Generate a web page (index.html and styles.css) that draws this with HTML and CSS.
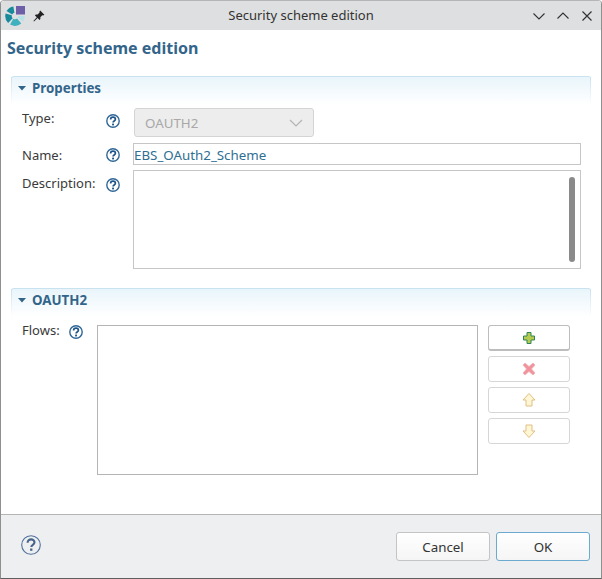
FILE: index.html
```html
<!DOCTYPE html>
<html lang="en">
<head>
  <meta charset="UTF-8">
  <title>Security scheme edition</title>
  <link rel="stylesheet" href="styles.css">
</head>
<body>
  <svg class="defs" width="0" height="0">
    <symbol id="help" viewBox="0 0 14 14">
      <circle cx="7" cy="7" r="6.2" fill="#fff" stroke="#2f6797" stroke-width="1.4"/>
      <path d="M4.600 5.500c0-1.500 1.100-2.300 2.400-2.300s2.400.8 2.400 2.100c0 1.800-2.300 1.700-2.300 3.300" fill="none" stroke="#1f5488" stroke-width="1.700"/>
      <rect x="6.100" y="9.600" width="1.900" height="1.800" fill="#1f5488"/>
    </symbol>
    <symbol id="twisty" viewBox="0 0 8 5">
      <path d="M0 0h8L4 4.500z" fill="#33658a"/>
    </symbol>
  </svg>

  <div class="window">
    <div class="titlebar">
      <svg class="logo" width="22" height="22" viewBox="0 0 22 22">
        <rect x="11" y="1" width="9" height="8.500" fill="#6f5fa8"/>
        <g fill="none" stroke-width="6.500">
          <path d="M8.870 4.600A6.500 6.500 0 0 0 4.370 7.750" stroke="#178a9c"/>
          <path d="M3.720 9.320A6.500 6.500 0 0 0 5.400 15.600" stroke="#178a9c"/>
          <path d="M6.750 16.630A6.500 6.500 0 0 0 14.180 15.980" stroke="#3fb0bd"/>
          <path d="M15.320 14.730A6.500 6.500 0 0 0 16.500 11" stroke="#b5e3e8"/>
        </g>
      </svg>
      <svg class="pin" width="12" height="12" viewBox="0 0 12 12">
        <path d="M7.200 0.600l4.200 4.200-1.200.6-.9-.2-2 2 .1 1.800-.9.9-1.900-1.900L1 11.600l-.6-.6 3.400-3.700-1.900-1.900.9-.9 1.800.1 2-2-.2-.9z" fill="#222"/>
      </svg>
      <span class="title">Security scheme edition</span>
      <svg class="winbtn" width="14" height="14" viewBox="0 0 14 14"><path d="M1.500 4.500L7 10l5.500-5.500" fill="none" stroke="#333" stroke-width="1.100"/></svg>
      <svg class="winbtn" width="14" height="14" viewBox="0 0 14 14"><path d="M1.500 9.500L7 4l5.500 5.500" fill="none" stroke="#333" stroke-width="1.100"/></svg>
      <svg class="winbtn" width="14" height="14" viewBox="0 0 14 14"><path d="M2.500 2.500l9 9M11.500 2.500l-9 9" fill="none" stroke="#333" stroke-width="1.200"/></svg>
    </div>

    <div class="content">
      <h1>Security scheme edition</h1>

      <!-- Properties -->
      <section class="section props">
        <h2><svg class="twisty"><use href="#twisty"/></svg>Properties</h2>
        <div class="form">
          <label class="lbl lbl-type">Type:</label>
          <svg class="help help-type"><use href="#help"/></svg>
          <div class="select">
            <span>OAUTH2</span>
            <svg width="14" height="8" viewBox="0 0 14 8"><path d="M1 1l6 6 6-6" fill="none" stroke="#b4b4b4" stroke-width="1.200"/></svg>
          </div>

          <label class="lbl lbl-name">Name:</label>
          <svg class="help help-name"><use href="#help"/></svg>
          <div class="input">EBS_OAuth2_Scheme</div>

          <label class="lbl lbl-desc">Description:</label>
          <svg class="help help-desc"><use href="#help"/></svg>
          <div class="textarea"><div class="scrollbar"></div></div>
        </div>
      </section>

      <!-- OAUTH2 -->
      <section class="section">
        <h2><svg class="twisty"><use href="#twisty"/></svg>OAUTH2</h2>
        <div class="flows">
          <label class="lbl">Flows:</label>
          <svg class="help"><use href="#help"/></svg>
          <div class="list"></div>
          <div class="tools">
            <button class="tool tool-on">
              <svg width="14" height="14" viewBox="0 0 14 14"><path d="M5 1.500h4v3.500h3.500v4H9v3.500H5V9H1.500V5H5z" fill="#b4cb4f" stroke="#2f8457"/></svg>
            </button>
            <button class="tool">
              <svg width="14" height="14" viewBox="0 0 14 14"><path d="M3 1l4 3.500L11 1l2 2-3.500 4L13 11l-2 2-4-3.500L3 13l-2-2 3.500-4L1 3z" fill="#f2939b" stroke="#eeb4b8" stroke-width=".8"/></svg>
            </button>
            <button class="tool">
              <svg width="14" height="14" viewBox="0 0 14 14"><path d="M7 .5l6 6.500H10v6H4V7H1z" fill="#fff6d4" stroke="#e0bf85"/></svg>
            </button>
            <button class="tool">
              <svg width="14" height="14" viewBox="0 0 14 14"><path d="M7 13.500L13 7h-3V1H4v6H1z" fill="#fff6d4" stroke="#e0bf85"/></svg>
            </button>
          </div>
        </div>
      </section>
    </div>

    <div class="footer">
      <svg class="footer-help" width="20" height="20" viewBox="0 0 20 20">
        <circle cx="10" cy="10" r="9.300" fill="none" stroke="#4f7099" stroke-width="1.100"/>
        <path d="M6.600 7.800c0-2.100 1.500-3.400 3.500-3.400s3.400 1.200 3.400 2.900c0 2.600-3.200 2.500-3.200 4.800" fill="none" stroke="#47648a" stroke-width="2.100"/>
        <rect x="9.100" y="13.500" width="2.300" height="2.300" fill="#47648a"/>
      </svg>
      <button class="btn">Cancel</button>
      <button class="btn btn-default">OK</button>
    </div>
  </div>
</body>
</html>
```

FILE: styles.css
```css
* {
  box-sizing: border-box;
}
html, body {
  margin: 0;
  padding: 0;
  height: 100%;
}
body {
  font-family: "Noto Sans", "Open Sans", sans-serif;
  font-size: 13px;
  color: #3a3a3a;
  background: #fff;
}
.defs {
  display: block;
  height: 0;
}
.window {
  height: 579px;
  display: flex;
  flex-direction: column;
  border: 1px solid #8f8f8f;
  border-top-color: #b5b5b5;
  border-bottom-color: #5e5e5e;
  border-radius: 4px 4px 0 0;
  overflow: hidden;
}
.titlebar {
  height: 29px;
  flex: none;
  display: flex;
  align-items: center;
  padding: 0 7px 0 4px;
  background: #dedfe0;
  position: relative;
}
.logo {
  margin-right: 6px;
}
.pin {
  margin-right: auto;
}
.title {
  position: absolute;
  top: 5px;
  left: 0;
  right: 0;
  line-height: 18px;
  text-align: center;
  color: #333;
  font-size: 13px;
}
.winbtn {
  margin-left: 10px;
  position: relative;
}
.content {
  flex: 1;
  padding: 7px 10px 0 6px;
  background: #fff;
}
h1 {
  margin: 0 0 17px;
  height: 22px;
  line-height: 22px;
  font-size: 16px;
  font-weight: 700;
  color: #33658a;
}
.section {
  margin-left: 4px;
  border-radius: 3px 3px 0 0;
  background: linear-gradient(#e9f5fb, #fff 28px) no-repeat;
  border-top: 1px solid #c9e2f0;
  position: relative;
}
.section::before, .section::after {
  content: "";
  position: absolute;
  top: 0;
  width: 1px;
  height: 28px;
  background: linear-gradient(#c9e2f0, #fff);
}
.section::before {
  left: 0;
}
.section::after {
  right: 0;
}
.props {
  margin-bottom: 19px;
}
h2 {
  margin: 0;
  height: 22px;
  display: flex;
  align-items: center;
  padding-left: 7px;
  font-size: 13.33px;
  font-weight: 700;
  color: #33658a;
}
.twisty {
  width: 8px;
  height: 5px;
  margin-right: 6px;
}
.form {
  display: grid;
  grid-template-columns: 84px 27px 448px;
  grid-template-rows: 35px 27px 99px;
  padding: 9px 0 0 11px;
}
.lbl {
  line-height: 18px;
  color: #3a3a3a;
}
.lbl-type {
  margin-top: 1px;
}
.lbl-name {
  margin-top: 3px;
}
.lbl-desc {
  margin-top: 4px;
}
.help {
  width: 14px;
  height: 14px;
}
.help-type {
  margin-top: 6px;
}
.help-name {
  margin-top: 5px;
}
.help-desc {
  margin-top: 8px;
}
.select {
  width: 180px;
  height: 29px;
  margin-left: 1px;
  display: flex;
  align-items: center;
  justify-content: space-between;
  padding: 0 10px 0 10px;
  background: #ededed;
  border: 1px solid #d4d4d4;
  border-radius: 3px;
  color: #a8a8a8;
  font-size: 13.33px;
}
.input {
  height: 22px;
  line-height: 22px;
  border: 1px solid #c6c6c6;
  color: #2f6f94;
  font-size: 13.33px;
}
.textarea {
  height: 99px;
  border: 1px solid #c6c6c6;
  position: relative;
}
.scrollbar {
  position: absolute;
  right: 5px;
  top: 6px;
  width: 6px;
  height: 85px;
  border-radius: 3px;
  background: #8a8a8a;
}
.flows {
  display: flex;
  align-items: flex-start;
  padding: 14px 0 0 11px;
}
.flows .lbl {
  width: 47px;
  margin-top: -4px;
}
.flows .help {
  margin-right: 14px;
}
.list {
  width: 381px;
  height: 150px;
  border: 1px solid #b5b5b5;
}
.tools {
  margin-left: 10px;
  display: flex;
  flex-direction: column;
  gap: 5px;
}
.tool {
  width: 82px;
  height: 26px;
  padding: 0;
  display: flex;
  align-items: center;
  justify-content: center;
  background: #fff;
  border: 1px solid #d6d6d6;
  border-radius: 3px;
}
.tool-on {
  border-color: #bdbdbd;
  border-bottom-width: 2px;
}
.footer {
  height: 64px;
  flex: none;
  display: flex;
  align-items: flex-start;
  padding: 17px 11px 0 20px;
  background: #eeeff1;
  border-top: 1px solid #b5b5b5;
  gap: 6px;
}
.footer-help {
  margin: 3px auto 0 0;
}
.btn {
  width: 94px;
  height: 29px;
  padding: 0;
  font-family: inherit;
  font-size: 13.33px;
  color: #333;
  background: linear-gradient(#fff, #f5f5f5);
  border: 1px solid #c4c4c4;
  border-radius: 3px;
}
.btn-default {
  border-color: #6caad0;
}
```
